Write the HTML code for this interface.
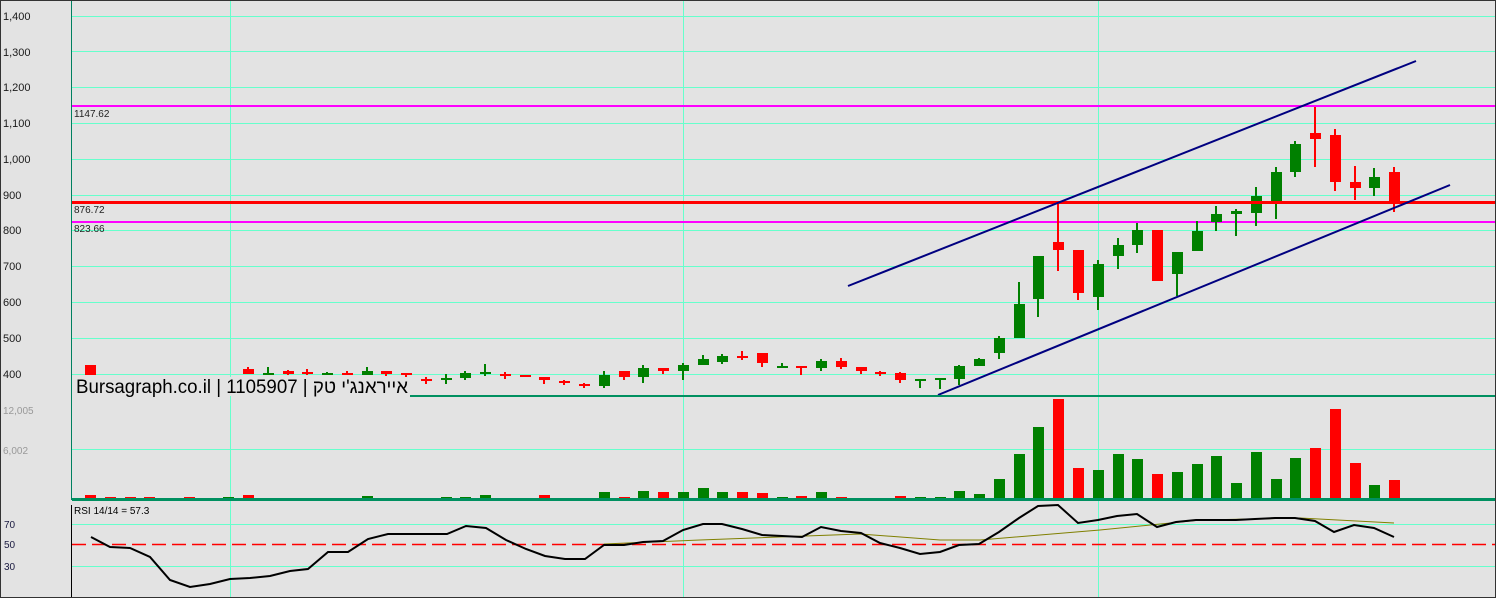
<!DOCTYPE html>
<html><head><meta charset="utf-8"><style>
html,body{margin:0;padding:0;background:#e3e3e3;}
svg{display:block;}
text{font-family:"Liberation Sans",sans-serif;}
</style></head><body>
<svg id="s" width="1496" height="598" xmlns="http://www.w3.org/2000/svg">
<rect width="1496" height="598" fill="#e3e3e3"/>
<g id="grid" stroke="#66ffcc" stroke-width="1" shape-rendering="crispEdges"></g>
<g id="c" shape-rendering="crispEdges"></g>
<g id="o"></g>
</svg>
<script>
const NS="http://www.w3.org/2000/svg";
function el(p,t,a,txt){const e=document.createElementNS(NS,t);for(const k in a)e.setAttribute(k,a[k]);if(txt!==undefined)e.textContent=txt;p.appendChild(e);return e;}
const g=document.getElementById('grid'),c=document.getElementById('c'),o=document.getElementById('o'),s=document.getElementById('s');
[16,51,87,123,159,195,230,266,302,338,374].forEach(y=>el(g,'line',{x1:72,x2:1496,y1:y+.5,y2:y+.5}));
[449].forEach(y=>el(g,'line',{x1:72,x2:1496,y1:y+.5,y2:y+.5}));
[524,566].forEach(y=>el(g,'line',{x1:72,x2:1496,y1:y+.5,y2:y+.5}));
[230,683,1098].forEach(x=>el(g,'line',{x1:x+.5,x2:x+.5,y1:0,y2:598}));
el(c,'rect',{x:72,y:105,width:1424,height:2,fill:'#ff00ff'});
el(c,'rect',{x:72,y:221,width:1424,height:2,fill:'#ff00ff'});
const R='#ff0000',G='#008000';
const d=[
[R,365,365,375,375,495],[R,385,385,387,388,497],[R,385,385,387,388,497],[R,385,385,387,388,497],[G,386,386,387,388,499],[R,385,385,387,388,497],[G,386,386,387,388,499],[G,385,385,387,388,497],
[R,367,369,374,374,495],[G,367,373,374,374,498],[R,370,371,374,375,498],[R,369,372,374,375,498],[G,372,373,374,375,499],[R,371,373,374,375,498],[G,367,371,375,375,496],[R,371,371,374,376,498],[R,373,373,375,377,498],
[R,377,379,380,384,498],[G,374,378,380,384,497],[G,371,373,378,380,497],[G,364,372,373,376,495],[R,372,374,376,379,498],[R,375,375,376,377,499],[R,377,377,380,384,495],[R,380,381,383,385,498],[R,383,384,385,388,498],
[G,371,375,386,388,492],[R,371,371,377,380,497],[G,365,368,377,383,491],[R,368,368,371,374,492],[G,363,365,371,380,492],[G,355,359,365,365,488],[G,354,356,362,364,492],[R,351,356,357,360,492],[R,353,353,363,367,493],
[G,363,366,367,367,497],[R,366,366,367,375,496],[G,359,361,368,371,492],[R,358,361,367,369,497],[R,367,367,371,374,498],[R,371,372,373,376,500],[R,372,373,380,383,496],[G,379,379,380,388,497],[G,378,378,379,389,497],
[G,365,366,379,385,491],[G,358,359,366,366,494],[G,336,338,353,359,479],[G,282,304,338,338,454],[G,256,256,299,317,427],[R,203,242,250,271,399],[R,250,250,293,300,468],[G,260,264,297,310,470],[G,238,245,256,269,454],
[G,223,230,245,253,459],[R,230,230,281,281,474],[G,252,252,274,296,472],[G,221,231,251,251,464],[G,206,214,222,231,456],[G,209,211,214,236,483],[G,187,196,213,226,452],[G,167,172,201,219,479],[G,141,144,172,177,458],
[R,107,133,139,167,448],[R,129,135,182,191,409],[R,166,182,188,200,463],[G,168,177,188,196,485],[R,167,172,203,212,480]];
d.forEach((v,i)=>{const x=Math.round(90+19.76*i);const[col,h,t,b,l,vt]=v;
el(c,'rect',{x:x-1,y:h,width:2,height:Math.max(1,l-h),fill:col});
el(c,'rect',{x:x-5,y:t,width:11,height:Math.max(2,b-t),fill:col});
if(vt<499)el(c,'rect',{x:x-5,y:vt,width:11,height:499-vt,fill:col});});
el(c,'rect',{x:72,y:201,width:1424,height:3,fill:'#ff0000'});
el(o,'line',{x1:848,y1:286,x2:1416,y2:61,stroke:'#000080','stroke-width':2});
el(o,'line',{x1:938,y1:395,x2:1450,y2:185,stroke:'#000080','stroke-width':2});
el(o,'rect',{x:73,y:377,width:337,height:19,fill:'#e3e3e3'});
el(o,'text',{x:76,y:393,'font-size':19,fill:'#000',textLength:332,lengthAdjust:'spacingAndGlyphs'},"Bursagraph.co.il | 1105907 | אייראנג'י טק");
el(o,'rect',{x:410,y:395,width:1086,height:2,fill:'#009060'});
el(o,'rect',{x:72,y:498,width:1424,height:3,fill:'#009060'});
el(o,'rect',{x:71,y:0,width:1,height:500,fill:'#008060'});
el(o,'rect',{x:71,y:505,width:1,height:93,fill:'#000'});
el(o,'line',{x1:72,x2:1496,y1:544.5,y2:544.5,stroke:'#ff0000','stroke-width':1.5,'stroke-dasharray':'14,6'});
el(o,'polyline',{points:'604,544 700,540 860,534 940,540 980,540 1100,530 1200,520 1300,518 1394,523',fill:'none',stroke:'#808000','stroke-width':1});
el(o,'polyline',{points:'91,537 110,547 130,548 150,557 170,580 190,587 210,584 230,579 250,578 270,576 290,571 308,569 328,552 348,552 368,539 388,534 408,534 427,534 447,534 466,526 486,528 506,540 526,549 545,556 565,559 585,559 604,545 624,545 643,542 663,541 683,530 703,524 722,524 742,529 762,535 782,536 802,537 821,527 841,531 861,533 880,543 900,548 920,554 940,552 959,545 979,544 999,532 1019,518 1038,506 1058,505 1078,523 1098,520 1117,516 1137,514 1157,527 1176,522 1196,520 1216,520 1236,520 1255,519 1275,518 1295,518 1315,521 1334,532 1354,525 1374,528 1394,537',fill:'none',stroke:'#000','stroke-width':2});
el(o,'text',{x:74,y:514,'font-size':10,fill:'#000'},'RSI 14/14 = 57.3');
[['1,400',20],['1,300',56],['1,200',91],['1,100',127],['1,000',163],['900',199],['800',234],['700',270],['600',306],['500',342],['400',378]].forEach(([t,y])=>el(o,'text',{x:3,y:y,'font-size':11,fill:'#1a1a1a'},t));
el(o,'text',{x:3,y:414,'font-size':10,fill:'#999'},'12,005');
el(o,'text',{x:3,y:454,'font-size':10,fill:'#999'},'6,002');
[['70',528],['50',548],['30',570]].forEach(([t,y])=>el(o,'text',{x:4,y:y,'font-size':10,fill:'#1a1a40'},t));
el(o,'text',{x:74,y:117,'font-size':10,fill:'#222'},'1147.62');
el(o,'text',{x:74,y:213,'font-size':10,fill:'#222'},'876.72');
el(o,'text',{x:74,y:232,'font-size':10,fill:'#222'},'823.66');
el(o,'rect',{x:0.5,y:0.5,width:1495,height:597,fill:'none',stroke:'#333','stroke-width':1});
</script>
</body></html>
